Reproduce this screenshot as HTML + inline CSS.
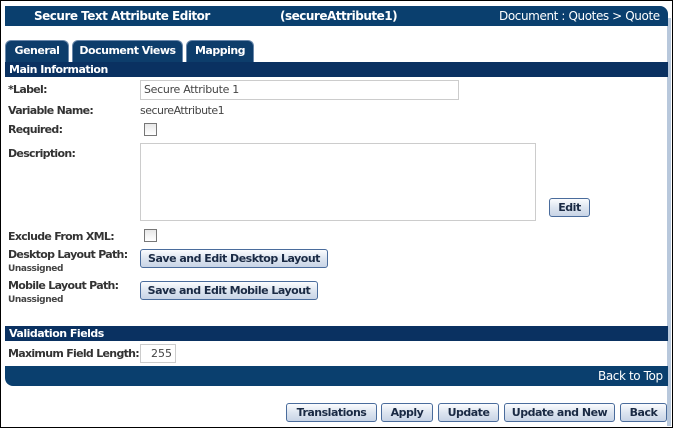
<!DOCTYPE html>
<html><head><style>
*{box-sizing:border-box;margin:0;padding:0}
body{width:673px;height:428px;background:#fff;font-family:"DejaVu Sans","Liberation Sans",sans-serif;font-size:11px;color:#333;position:relative;overflow:hidden}
.a{position:absolute;white-space:nowrap}
.bar{position:absolute;background:#0a3161;color:#fff;font-weight:bold;font-size:11px;padding-left:4px;line-height:15px;letter-spacing:-0.5px}
.lbl{position:absolute;font-weight:bold;font-size:11px;color:#333;letter-spacing:-0.7px}
.sm{position:absolute;font-size:9px;font-weight:bold;color:#444;letter-spacing:-0.4px}
.btn{position:absolute;height:19px;border:1px solid #4a6c9c;border-radius:3px;background:linear-gradient(#fbfcfe,#dde5f0 50%,#c8d4e6);font-weight:bold;font-size:11px;color:#1a2a44;text-align:center;line-height:17px;letter-spacing:-0.5px}
.cb{position:absolute;width:13px;height:13px;border:1px solid #777;background:linear-gradient(#e8e8e8,#fff)}
.tab{position:absolute;top:40px;height:22px;background:#0d3d6b;border-radius:6px 6px 0 0;color:#fff;font-weight:bold;font-size:11px;text-align:center;line-height:20px;letter-spacing:-0.5px;border:1px solid #6a88aa;border-bottom:none}
</style></head><body>
<div class="a" style="left:0;top:0;width:673px;height:428px;border:1px solid #000"></div>
<div class="a" style="left:667px;top:18px;width:4px;height:408px;background:#b8c8dc"></div>
<div class="a" style="left:5px;top:6px;width:663px;height:20px;background:#0a3f6e;border-radius:0 8px 0 0"></div>
<div class="a" style="left:34px;top:9px;color:#fff;font-weight:bold;font-size:12px;letter-spacing:-0.5px">Secure Text Attribute Editor</div>
<div class="a" style="left:280px;top:9px;color:#fff;font-weight:bold;font-size:12px;letter-spacing:-0.5px">(secureAttribute1)</div>
<div class="a" style="left:499px;top:9px;color:#fff;font-size:12px;letter-spacing:-0.4px">Document : Quotes &gt; Quote</div>
<div class="tab" style="left:5px;width:64px">General</div>
<div class="tab" style="left:72px;width:111px">Document Views</div>
<div class="tab" style="left:186px;width:68px">Mapping</div>
<div class="bar" style="left:5px;top:62px;width:663px">Main Information</div>
<div class="lbl" style="left:8px;top:83px">*Label:</div>
<div class="a" style="left:140px;top:80px;width:319px;height:20px;border:1px solid #ccc;padding-left:3px;line-height:18px;font-size:11px;color:#444;letter-spacing:-0.3px">Secure Attribute 1</div>
<div class="lbl" style="left:8px;top:104px">Variable Name:</div>
<div class="a" style="left:140px;top:104px;font-size:11px;color:#444;letter-spacing:-0.5px">secureAttribute1</div>
<div class="lbl" style="left:8px;top:123px">Required:</div>
<div class="cb" style="left:144px;top:123px"></div>
<div class="lbl" style="left:8px;top:147px">Description:</div>
<div class="a" style="left:140px;top:143px;width:396px;height:78px;border:1px solid #ccc"></div>
<div class="btn" style="left:549px;top:198px;width:41px">Edit</div>
<div class="lbl" style="left:8px;top:230px">Exclude From XML:</div>
<div class="cb" style="left:144px;top:229px"></div>
<div class="lbl" style="left:8px;top:248px">Desktop Layout Path:</div>
<div class="sm" style="left:8px;top:264px">Unassigned</div>
<div class="btn" style="left:140px;top:249px;width:188px">Save and Edit Desktop Layout</div>
<div class="lbl" style="left:8px;top:279px">Mobile Layout Path:</div>
<div class="sm" style="left:8px;top:295px">Unassigned</div>
<div class="btn" style="left:140px;top:281px;width:178px">Save and Edit Mobile Layout</div>
<div class="bar" style="left:5px;top:326px;width:663px">Validation Fields</div>
<div class="lbl" style="left:8px;top:347px">Maximum Field Length:</div>
<div class="a" style="left:140px;top:344px;width:36px;height:19px;border:1px solid #ccc;text-align:right;padding-right:3px;line-height:17px;font-size:11px;color:#444">255</div>
<div class="a" style="left:5px;top:366px;width:663px;height:20px;background:#0a3f6e;border-radius:0 0 0 8px"></div>
<div class="a" style="left:598px;top:369px;color:#fff;font-size:12px;letter-spacing:-0.4px">Back to Top</div>
<div class="btn" style="left:286px;top:403px;width:91px">Translations</div>
<div class="btn" style="left:381px;top:403px;width:52px">Apply</div>
<div class="btn" style="left:438px;top:403px;width:61px">Update</div>
<div class="btn" style="left:504px;top:403px;width:111px">Update and New</div>
<div class="btn" style="left:620px;top:403px;width:47px">Back</div>
</body></html>
